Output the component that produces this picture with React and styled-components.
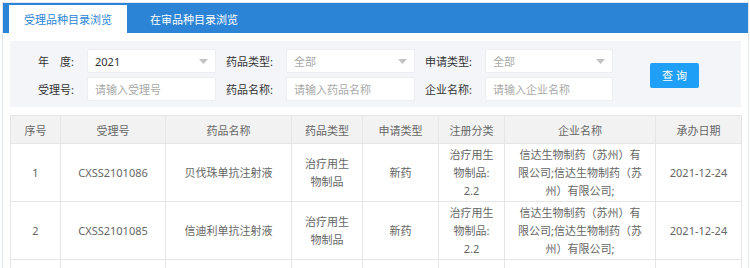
import React from "react";
import styled, { createGlobalStyle } from "styled-components";

const Global = createGlobalStyle`
  html, body { margin: 0; padding: 0; background: #fff; }
  body { padding: 2px 1px 0 2px; font-family: "Noto Sans", "Noto Sans CJK SC", sans-serif; }
  * { box-sizing: border-box; }
`;

const Frame = styled.div`
  width: 747px;
  border: 1px solid #dfe5ee;
  background: #fff;
`;

const TabBar = styled.div`
  display: flex;
  align-items: flex-end;
  gap: 8px;
  height: 30px;
  padding-left: 6px;
  background: #2b84d6;
`;

const Tab = styled.div`
  height: 28px;
  display: flex;
  align-items: center;
  padding: 0 15px;
  font-size: 11px;
  color: ${(p) => (p.$active ? "#2b84d6" : "#fff")};
  background: ${(p) => (p.$active ? "#fff" : "transparent")};
`;

const Body = styled.div`
  padding: 8px 7px 0 7px;
  display: flex;
  flex-direction: column;
  gap: 8px;
`;

const SearchPanel = styled.div`
  background: #f4f5f9;
  padding: 8px 7px 6px 7px;
  display: flex;
  align-items: center;
`;

const FormGrid = styled.div`
  display: grid;
  grid-template-columns: 70px 129px 70px 129px 70px 128px;
  row-gap: 4px;
  align-items: center;
`;

const Label = styled.label`
  font-size: 11px;
  color: #333;
  text-align: right;
  padding-right: 13px;
  white-space: nowrap;
`;

const Field = styled.div`
  position: relative;
  height: 24px;
  background: #fff;
  border: 1px solid #eceef2;
  border-radius: 2px;
  display: flex;
  align-items: center;
  padding: 0 22px 0 7px;
  font-size: 11px;
  color: ${(p) => (p.$placeholder ? "#a9a9a9" : "#333")};
  white-space: nowrap;
`;

const Caret = styled.svg`
  position: absolute;
  right: 7px;
  top: 9px;
`;

const QueryButton = styled.button`
  margin-left: 37px;
  width: 49px;
  height: 25px;
  border: none;
  border-radius: 2px;
  background: #1fa0f6;
  color: #fff;
  font-family: inherit;
  font-size: 11px;
  letter-spacing: 3px;
  padding: 0 0 0 3px;
`;

const Table = styled.table`
  width: 731px;
  table-layout: fixed;
  border-collapse: collapse;
  font-size: 11px;
  color: #666;
`;

const Th = styled.th`
  height: 28px;
  padding: 0 10px;
  background: #f2f2f2;
  border: 1px solid #e6e6e6;
  font-weight: normal;
  text-align: center;
  color: #666;
`;

const Td = styled.td`
  height: 58px;
  padding: 0 ${(p) => p.$pad || 10}px;
  border: 1px solid #e6e6e6;
  text-align: center;
  vertical-align: middle;
  line-height: 18px;
`;

const DropCaret = () => (
  <Caret width="9" height="5" viewBox="0 0 9 5">
    <polygon points="0,0 9,0 4.5,5" fill="#c2c2c2" />
  </Caret>
);

const Select = ({ value, placeholder }) => (
  <Field $placeholder={placeholder}>
    {value}
    <DropCaret />
  </Field>
);

const widths = [50, 105, 126, 71, 76, 66, 151, 86];
const headers = ["序号", "受理号", "药品名称", "药品类型", "申请类型", "注册分类", "企业名称", "承办日期"];

const rows = [
  ["1", "CXSS2101086", "贝伐珠单抗注射液"],
  ["2", "CXSS2101085", "信迪利单抗注射液"],
];

export default function App() {
  return (
    <>
      <Global />
      <Frame>
        <TabBar>
          <Tab $active>受理品种目录浏览</Tab>
          <Tab>在审品种目录浏览</Tab>
        </TabBar>
        <Body>
          <SearchPanel>
            <FormGrid>
              <Label>年　度:</Label>
              <Select value="2021" />
              <Label>药品类型:</Label>
              <Select value="全部" placeholder />
              <Label>申请类型:</Label>
              <Select value="全部" placeholder />
              <Label>受理号:</Label>
              <Field $placeholder>请输入受理号</Field>
              <Label>药品名称:</Label>
              <Field $placeholder>请输入药品名称</Field>
              <Label>企业名称:</Label>
              <Field $placeholder>请输入企业名称</Field>
            </FormGrid>
            <QueryButton>查询</QueryButton>
          </SearchPanel>
          <Table>
            <colgroup>
              {widths.map((w, i) => (
                <col key={i} style={{ width: w }} />
              ))}
            </colgroup>
            <thead>
              <tr>
                {headers.map((h) => (
                  <Th key={h}>{h}</Th>
                ))}
              </tr>
            </thead>
            <tbody>
              {rows.map((r) => (
                <tr key={r[0]}>
                  <Td>{r[0]}</Td>
                  <Td>{r[1]}</Td>
                  <Td>{r[2]}</Td>
                  <Td>治疗用生物制品</Td>
                  <Td>新药</Td>
                  <Td>治疗用生物制品: 2.2</Td>
                  <Td $pad={11}>信达生物制药（苏州）有限公司;信达生物制药（苏州）有限公司;</Td>
                  <Td>2021-12-24</Td>
                </tr>
              ))}
              <tr>
                {widths.map((w, i) => (
                  <Td key={i} />
                ))}
              </tr>
            </tbody>
          </Table>
        </Body>
      </Frame>
    </>
  );
}
